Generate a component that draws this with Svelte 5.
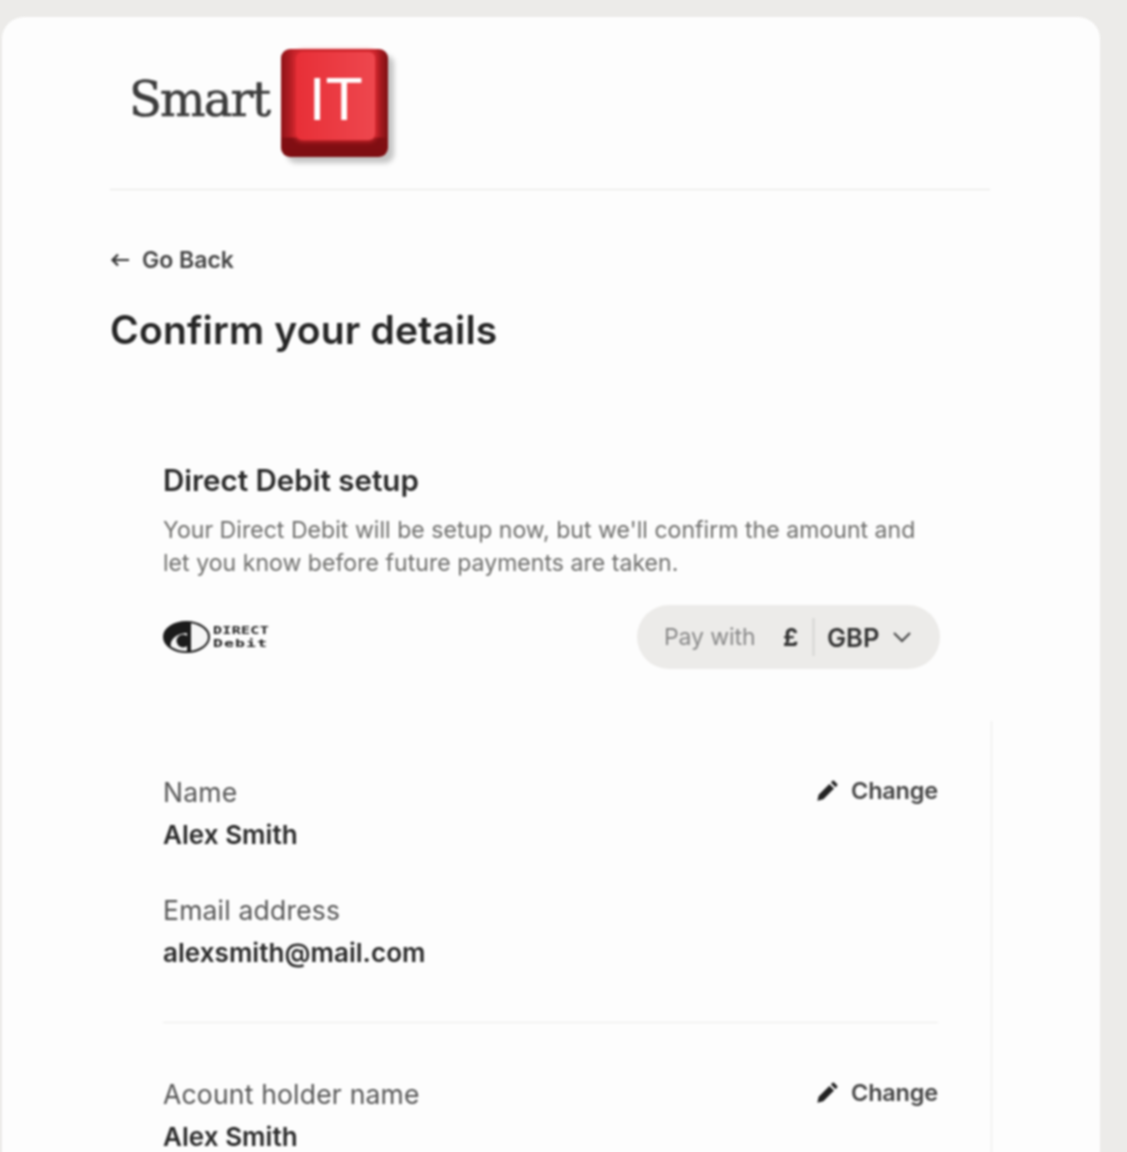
<script>
	const groups = [
		{ label: "Name", value: "Alex Smith" },
		{ label: "Email address", value: "alexsmith@mail.com" }
	];
</script>

<div class="page">
	<main class="card">
		<header class="brand">
			<span class="smart">Smart</span>
			<span class="key"><span class="cap">IT</span></span>
		</header>

		<a class="back" href="#back">
			<svg width="20" height="14" viewBox="0 0 20 14" fill="none" stroke="#333" stroke-width="2.2">
				<path d="M19 7H2.5M8 1.6 2.5 7 8 12.4" />
			</svg>
			Go Back
		</a>
		<h1>Confirm your details</h1>

		<section class="setup">
			<h2>Direct Debit setup</h2>
			<p>Your Direct Debit will be setup now, but we'll confirm the amount and<br />let you know before future payments are taken.</p>
			<div class="pay-row">
				<div class="dd-logo">
					<svg width="47" height="32" viewBox="0 0 47 32">
						<ellipse cx="23.5" cy="16" rx="22.5" ry="15" fill="#f6f6f6" stroke="#1b1b1b" stroke-width="2" />
						<path d="M26 1C12 1 1 8 1 16c0 4 3 8 7 10-2-6 4-14 18-14z" fill="#1b1b1b" />
						<circle cx="20" cy="20" r="6.5" fill="#1b1b1b" />
						<rect x="24" y="1" width="4" height="30" fill="#1b1b1b" />
					</svg>
					<div class="dd-text"><span>DIRECT</span><span>Debit</span></div>
				</div>
				<div class="pay-with">
					<span class="pay-label">Pay with</span>
					<span class="sym">£</span>
					<span class="divider"></span>
					<span class="code">GBP</span>
					<svg width="20" height="12" viewBox="0 0 20 12" fill="none" stroke="#444" stroke-width="2">
						<path d="M2 2l8 8 8-8" />
					</svg>
				</div>
			</div>
		</section>

		<section class="details">
			<div class="group">
				<button class="change">
					<svg width="22" height="22" viewBox="0 0 24 24" fill="#222">
						<path d="M1.5 22.5l1.4-6.5L14.6 4.3l5.1 5.1L8 21.1zM16.2 2.7l1.8-1.8a1.2 1.2 0 0 1 1.7 0l3.4 3.4a1.2 1.2 0 0 1 0 1.7L21.3 7.8z" />
					</svg>
					Change
				</button>
				{#each groups as g}
					<div class="field">
						<div class="label">{g.label}</div>
						<div class="value">{g.value}</div>
					</div>
				{/each}
			</div>
			<div class="group">
				<button class="change">
					<svg width="22" height="22" viewBox="0 0 24 24" fill="#222">
						<path d="M1.5 22.5l1.4-6.5L14.6 4.3l5.1 5.1L8 21.1zM16.2 2.7l1.8-1.8a1.2 1.2 0 0 1 1.7 0l3.4 3.4a1.2 1.2 0 0 1 0 1.7L21.3 7.8z" />
					</svg>
					Change
				</button>
				<div class="field">
					<div class="label">Acount holder name</div>
					<div class="value">Alex Smith</div>
				</div>
			</div>
		</section>
	</main>
</div>

<style>
	:global(body) {
		background: #ecebe9;
		font-family: Inter, "Liberation Sans", sans-serif;
	}
	.page {
		height: 1152px;
		overflow: hidden;
		padding: 17px 27px 0 2px;
		box-sizing: border-box;
	}
	.card {
		background: #fdfdfd;
		border-radius: 22px 22px 0 0;
		padding: 0 110px 0 108px;
		height: 1200px;
		box-sizing: border-box;
		color: #2a2a2a;
		filter: blur(0.8px);
	}
	.brand {
		display: flex;
		align-items: center;
		height: 173px;
		border-bottom: 1px solid #e4e4e2;
		padding-left: 19px;
		box-sizing: border-box;
		gap: 12px;
	}
	.smart {
		font-family: "DejaVu Serif", serif;
		font-size: 48px;
		letter-spacing: -1.8px;
		color: #3c3c3c;
		-webkit-text-stroke: 0.6px #3c3c3c;
		position: relative;
		top: -4px;
	}
	.key {
		width: 107px;
		height: 108px;
		border-radius: 9px;
		background:
			linear-gradient(to right, #8e1217 0, #c22229 12%, #c22229 88%, #7e0f13 100%) top / 100% 82% no-repeat,
			linear-gradient(to bottom, #94141a, #7e0e12);
		box-shadow: 6px 6px 5px #c4c4c4;
		display: block;
		padding: 3px 13px 17px 15px;
		box-sizing: border-box;
	}
	.cap {
		display: block;
		height: 100%;
		border-radius: 6px;
		background: linear-gradient(to right, #e82f37, #ee474e);
		box-shadow: 0 0 5px 1px #e32e35;
		color: #fff;
		font-family: "Liberation Sans", sans-serif;
		font-size: 61px;
		line-height: 94px;
		text-align: center;
		font-weight: 400;
	}
	.back {
		display: flex;
		align-items: center;
		gap: 12px;
		margin-top: 58px;
		height: 24px;
		font-size: 23px;
		font-weight: 600;
		color: #444;
		text-decoration: none;
	}
	h1 {
		margin: 34px 0 0;
		font-size: 39px;
		line-height: 48px;
		font-weight: 600;
		letter-spacing: 0.2px;
		color: #252525;
	}
	.setup {
		padding: 108px 53px 0 53px;
	}
	h2 {
		margin: 0;
		font-size: 29.5px;
		line-height: 36px;
		font-weight: 600;
		color: #2a2a2a;
	}
	p {
		margin: 16px 0 0;
		font-size: 23px;
		line-height: 33px;
		letter-spacing: 0.05px;
		color: #6e6e6c;
	}
	.pay-row {
		display: flex;
		align-items: center;
		justify-content: space-between;
		margin-top: 25px;
		margin-right: -3px;
	}
	.dd-logo {
		display: flex;
		align-items: center;
	}
	/* the logo's lettering is much wider than any installed face */
	.dd-text {
		display: flex;
		flex-direction: column;
		font-family: "DejaVu Sans Mono", monospace;
		font-weight: 700;
		font-size: 10px;
		line-height: 12px;
		letter-spacing: 0.2px;
		color: #222;
		margin-left: 3px;
		transform: scaleX(1.5);
		transform-origin: left;
	}
	.dd-text span:last-child {
		font-size: 11px;
		line-height: 13px;
		letter-spacing: 0.7px;
	}
	.pay-with {
		display: flex;
		align-items: center;
		height: 64px;
		width: 303px;
		border-radius: 32px;
		background: #ecebe9;
		padding-left: 27px;
		box-sizing: border-box;
	}
	.pay-label {
		font-size: 23px;
		letter-spacing: -0.1px;
		color: #888;
		width: 119px;
	}
	.sym {
		font-size: 24px;
		font-weight: 700;
		color: #333;
		width: 29px;
	}
	.divider {
		width: 3px;
		height: 38px;
		background: #dcdcda;
		margin-right: 12px;
	}
	.code {
		font-size: 25.5px;
		font-weight: 600;
		color: #333;
		margin-right: 13px;
	}
	.details {
		margin-top: 52px;
		border-right: 1px solid #ebebe9;
		padding: 0 53px 0 53px;
		margin-right: -2px;
	}
	.group {
		position: relative;
		padding-top: 56px;
		padding-bottom: 54px;
		border-bottom: 1px solid #ebebe9;
	}
	.group:last-child {
		border-bottom: 0;
	}
	.change {
		position: absolute;
		right: 0;
		top: 55px;
		display: flex;
		align-items: center;
		gap: 13px;
		border: 0;
		background: none;
		padding: 0;
		font-family: inherit;
		font-size: 23.5px;
		font-weight: 600;
		letter-spacing: -0.2px;
		color: #444;
	}
	.field + .field {
		margin-top: 45px;
	}
	.label {
		font-size: 26.5px;
		line-height: 30px;
		color: #555;
		letter-spacing: 0.2px;
	}
	.value {
		margin-top: 13px;
		font-size: 26px;
		line-height: 30px;
		font-weight: 600;
		color: #2a2a2a;
		letter-spacing: 0.05px;
	}
</style>
